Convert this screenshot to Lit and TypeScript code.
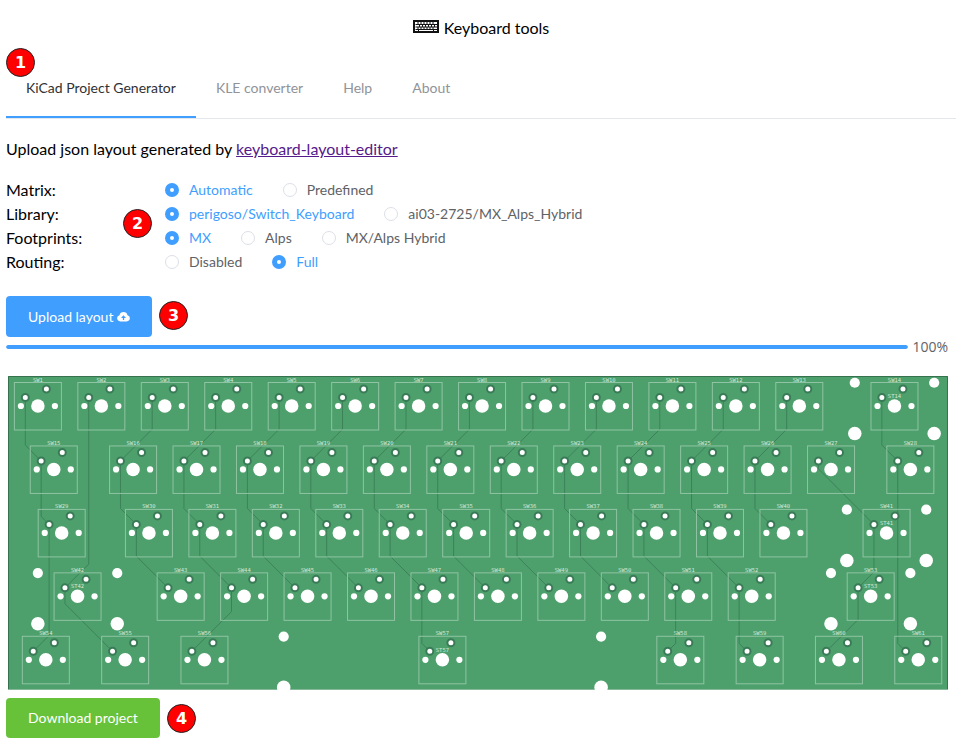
import { LitElement, html, svg, css } from "lit";
import { customElement, state } from "lit/decorators.js";

// Board drawing units: half a screen pixel at the natural board width.
const PITCH = 126.9;
const ORIGIN_X = 59.8;
const ORIGIN_Y = 60;

interface Key {
  n: number;
  x: number;
  row: number;
  stab?: number;
}

const run = (from: number, count: number, x: number, row: number): Key[] =>
  Array.from({ length: count }, (_, i) => ({ n: from + i, x: x + i, row }));

const KEYS: Key[] = [
  ...run(1, 13, 0, 0),
  { n: 14, x: 13.5, row: 0, stab: 79.4 },
  { n: 15, x: 0.25, row: 1 },
  ...run(16, 12, 1.5, 1),
  { n: 28, x: 13.75, row: 1 },
  { n: 29, x: 0.375, row: 2 },
  ...run(30, 11, 1.75, 2),
  { n: 41, x: 13.375, row: 2, stab: 79.4 },
  { n: 42, x: 0.625, row: 3, stab: 79.4 },
  ...run(43, 10, 2.25, 3),
  { n: 53, x: 13.125, row: 3, stab: 79.4 },
  { n: 54, x: 0.125, row: 4 },
  { n: 55, x: 1.375, row: 4 },
  { n: 56, x: 2.625, row: 4 },
  { n: 57, x: 6.375, row: 4, stab: 317.4 },
  { n: 58, x: 10.125, row: 4 },
  { n: 59, x: 11.375, row: 4 },
  { n: 60, x: 12.625, row: 4 },
  { n: 61, x: 13.875, row: 4 },
];

const range = (n: number) => Array.from({ length: n }, (_, i) => i);

// Pairs of switches that share a column trace.
const TRACES: [number, number][] = [
  [1, 15], [15, 29], [29, 54], [2, 42], [42, 55],
  ...range(11).map((i): [number, number] => [3 + i, 16 + i]),
  ...range(11).map((i): [number, number] => [16 + i, 30 + i]),
  ...range(10).map((i): [number, number] => [30 + i, 43 + i]),
  [44, 56], [47, 57], [51, 58], [52, 59],
  [27, 41], [41, 53], [53, 60], [14, 28], [28, 61],
];

const cx = (k: Key) => ORIGIN_X + k.x * PITCH;
const cy = (k: Key) => ORIGIN_Y + k.row * PITCH;
const PAD_X = -25.2;
const PAD_Y = -17;

@customElement("pcb-preview")
class PcbPreview extends LitElement {
  static styles = css`
    :host { display: block; }
    svg { display: block; width: 100%; height: auto; }
    .board { fill: #4da06c; }
    .edge { fill: none; stroke: #35724d; stroke-width: 2; }
    .base { stroke: #86b89a; stroke-width: 2; }
    .trace { fill: none; stroke: #3c8259; stroke-width: 2; }
    .outline { fill: none; stroke: #8fc3a3; stroke-width: 2; }
    .pad { fill: #fff; stroke: #3a7b57; stroke-width: 4; }
    .hole { fill: #fff; }
    text { font: 11px "DejaVu Sans Mono", monospace; fill: #d3e8da; text-anchor: middle; }
  `;

  private trace([a, b]: [number, number]) {
    const from = KEYS[a - 1], to = KEYS[b - 1];
    const x1 = cx(from) + PAD_X, y1 = cy(from) + PAD_Y;
    const x2 = cx(to) + PAD_X, y2 = cy(to) + PAD_Y;
    const bend = y2 - Math.abs(x2 - x1);
    return svg`<path class="trace" d="M${x1} ${y1}V${bend}L${x2} ${y2}"></path>`;
  }

  private key(k: Key) {
    return svg`<g transform="translate(${cx(k)} ${cy(k)})">
      <rect class="outline" x="-47" y="-47" width="94" height="95"></rect>
      <circle class="hole" r="13.5"></circle>
      <circle class="hole" cx="-34" r="6.2"></circle>
      <circle class="hole" cx="34" r="6.2"></circle>
      <circle class="pad" cx=${PAD_X} cy=${PAD_Y} r="7"></circle>
      <circle class="pad" cx="17" cy="-34" r="7"></circle>
      <text y="-49">SW${k.n}</text>
      ${k.stab
        ? svg`<text y="-16">ST${k.n}</text>
          ${[-k.stab, k.stab].map((x) => svg`
            <circle class="hole" cx=${x} cy="-46.5" r="10.2"></circle>
            <circle class="hole" cx=${x} cy="55" r="13.5"></circle>`)}`
        : null}
    </g>`;
  }

  render() {
    return html`<svg viewBox="0 0 1880 628" role="img" aria-label="Circuit board preview">
      <rect class="board" width="1880" height="628"></rect>
      <path class="edge" d="M1 627V1H1879V627"></path>
      <path class="base" d="M0 627H1880"></path>
      ${TRACES.map((t) => this.trace(t))}
      ${KEYS.map((k) => this.key(k))}
    </svg>`;
  }
}

const OPTIONS = [
  { name: "Matrix", values: ["Automatic", "Predefined"], picked: 0 },
  { name: "Library", values: ["perigoso/Switch_Keyboard", "ai03-2725/MX_Alps_Hybrid"], picked: 0 },
  { name: "Footprints", values: ["MX", "Alps", "MX/Alps Hybrid"], picked: 0 },
  { name: "Routing", values: ["Disabled", "Full"], picked: 1 },
];

const TABS = ["KiCad Project Generator", "KLE converter", "Help", "About"];

@customElement("app-root")
class AppRoot extends LitElement {
  @state() private tab = 0;
  @state() private picked = OPTIONS.map((o) => o.picked);

  static styles = css`
    :host {
      display: block;
      padding-left: 6px;
      font: 16px/24px Lato, "Noto Sans", sans-serif;
      color: #000;
    }
    .title {
      display: flex;
      justify-content: center;
      align-items: center;
      gap: 5px;
      margin: 0;
      padding: 16px 0 20px;
      font-size: 16px;
      font-weight: 400;
      line-height: 24px;
    }
    .keyboard { width: 26px; height: 13px; margin-bottom: 4px; }
    .tabs { position: relative; display: flex; border-bottom: 1px solid #e4e7ed; }
    .tab {
      height: 58px;
      padding: 0 20px;
      border: 0;
      border-bottom: 2px solid transparent;
      background: none;
      font: inherit;
      font-size: 14px;
      color: #909399;
    }
    .tab.active { border-color: #409eff; color: #303133; }
    .intro { margin: 18px 0 17px; }
    .intro a { color: #551a8b; }
    .options { position: relative; }
    fieldset { display: flex; align-items: center; height: 24px; margin: 0; padding: 0; border: 0; }
    legend { float: left; width: 159px; padding: 0; }
    .choices { display: flex; gap: 30px; }
    label {
      display: flex;
      align-items: center;
      gap: 10px;
      font-size: 14px;
      color: #606266;
    }
    label.on { color: #409eff; }
    input {
      appearance: none;
      width: 14px;
      height: 14px;
      margin: 0;
      border: 1px solid #dcdfe6;
      border-radius: 50%;
      background: #fff;
    }
    input:checked { border: 5px solid #409eff; }
    .action { position: relative; display: flex; }
    .upload { margin-top: 22px; }
    .btn {
      display: flex;
      align-items: center;
      gap: 4px;
      height: 40px;
      padding: 0 22px;
      border: 0;
      border-radius: 4px;
      font: inherit;
      font-size: 14px;
      color: #fff;
    }
    .primary { height: 41px; background: #409eff; }
    .success { background: #67c23a; }
    .cloud { width: 13px; height: 11px; }
    .progress { display: flex; align-items: center; gap: 4px; height: 20px; margin-right: 8px; font-size: 14px; color: #606266; }
    .percent { font-family: "Open Sans", sans-serif; }
    .bar { flex: 1; height: 4px; border-radius: 2px; background: #ebeef5; overflow: hidden; }
    .fill { height: 100%; border-radius: 2px; background: #409eff; }
    pcb-preview { margin: 19px 8px 8px 2px; }
    .badge {
      position: absolute;
      box-sizing: border-box;
      width: 29px;
      height: 29px;
      border: 1px solid #222;
      border-radius: 50%;
      background: #f00;
      color: #fff;
      font: bold 16px/27px "DejaVu Sans", sans-serif;
      text-align: center;
    }
    .b1 { left: 0; top: -12px; }
    .b2 { left: 117px; top: 31px; }
    .b3 { left: 153px; top: 5px; }
    .b4 { left: 161px; top: 6px; }
  `;

  private pick(row: number, value: number) {
    this.picked = this.picked.map((p, i) => (i === row ? value : p));
  }

  render() {
    return html`
      <h1 class="title">
        <svg class="keyboard" viewBox="0 0 26 13" aria-hidden="true">
          <rect x="1" y="1" width="24" height="11" fill="#fff" stroke="#111" stroke-width="2"></rect>
          <path d="M2.5 4.5H24M2.5 7H24M2.5 9.5H24" stroke="#111" stroke-width="1"></path>
          <path d="M5 2v2.5M8 2v2.5M11 2v2.5M14 2v2.5M17 2v2.5M20 2v2.5M6.5 4.5V7M9.5 4.5V7M12.5 4.5V7M15.5 4.5V7M18.5 4.5V7M21.5 4.5V7M5 7v2.5M8 7v2.5M11 7v2.5M14 7v2.5M17 7v2.5M20 7v2.5M5.5 9.5V12M20.5 9.5V12" stroke="#111" stroke-width="1"></path>
        </svg>
        Keyboard tools
      </h1>
      <nav class="tabs" role="tablist">
        ${TABS.map((t, i) => html`<button class="tab ${i === this.tab ? "active" : ""}" role="tab"
          aria-selected=${i === this.tab} @click=${() => (this.tab = i)}>${t}</button>`)}
        <span class="badge b1">1</span>
      </nav>
      <p class="intro">Upload json layout generated by <a href="http://www.keyboard-layout-editor.com">keyboard-layout-editor</a></p>
      <div class="options">
        ${OPTIONS.map((o, r) => html`<fieldset>
          <legend>${o.name}:</legend>
          <div class="choices">
            ${o.values.map((v, i) => html`<label class=${this.picked[r] === i ? "on" : ""}>
              <input type="radio" name=${o.name} .checked=${this.picked[r] === i} @change=${() => this.pick(r, i)}>${v}</label>`)}
          </div>
        </fieldset>`)}
        <span class="badge b2">2</span>
      </div>
      <div class="action upload">
        <button class="btn primary">Upload layout
          <svg class="cloud" viewBox="0 0 12 10" aria-hidden="true">
            <path fill="#fff" d="M3 9.5a2.9 2.9 0 0 1-.7-5.7a3.8 3.8 0 0 1 7.4 0A2.9 2.9 0 0 1 9 9.5z"></path>
            <path fill="#409eff" d="M6 3.8 8.3 6.3H6.6V8.3H5.4V6.3H3.7z"></path>
          </svg>
        </button>
        <span class="badge b3">3</span>
      </div>
      <div class="progress">
        <div class="bar" role="progressbar" aria-valuenow="100" aria-label="Upload">
          <div class="fill" style="width: 100%"></div>
        </div>
        <span class="percent">100%</span>
      </div>
      <pcb-preview></pcb-preview>
      <div class="action">
        <button class="btn success">Download project</button>
        <span class="badge b4">4</span>
      </div>
    `;
  }
}
